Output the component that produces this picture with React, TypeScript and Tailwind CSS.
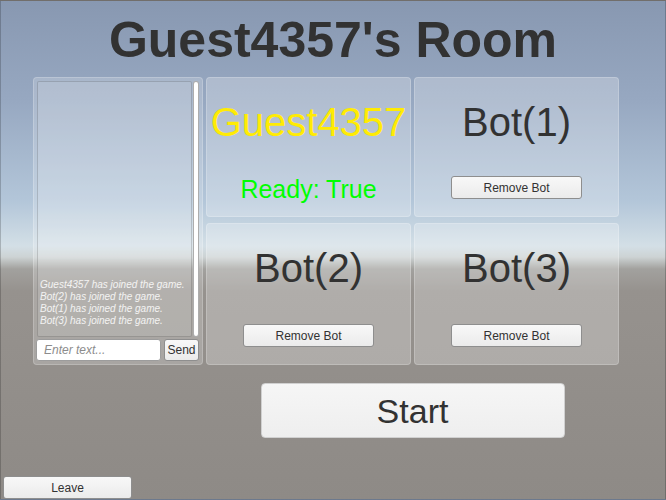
import React from "react";

const sans = { fontFamily: '"Liberation Sans", Arial, sans-serif' };

type Slot =
  | { kind: "player"; name: string; ready: boolean }
  | { kind: "bot"; name: string };

const slots: Slot[] = [
  { kind: "player", name: "Guest4357", ready: true },
  { kind: "bot", name: "Bot(1)" },
  { kind: "bot", name: "Bot(2)" },
  { kind: "bot", name: "Bot(3)" },
];

const messages = [
  "Guest4357 has joined the game.",
  "Bot(2) has joined the game.",
  "Bot(1) has joined the game.",
  "Bot(3) has joined the game.",
];

function SmallButton({ label, className = "" }: { label: string; className?: string }) {
  return (
    <button
      className={`flex items-center justify-center rounded-[3px] border border-[#8e8e8e] bg-gradient-to-b from-[#f8f8f8] to-[#ebebeb] text-[12px] leading-none text-[#323232] ${className}`}
    >
      {label}
    </button>
  );
}

function SlotCard({ slot }: { slot: Slot }) {
  return (
    <div className="flex flex-col items-center rounded-[4px] border border-white/20 bg-white/25">
      {slot.kind === "player" ? (
        <>
          <div className="mt-[24px] h-[40px] text-[40px] leading-none text-[#ffeb04]">{slot.name}</div>
          <div className="mt-auto mb-[15px] h-[25px] text-[25px] leading-[27px] text-[#00ff00]">
            Ready: {slot.ready ? "True" : "False"}
          </div>
        </>
      ) : (
        <>
          <div className="mt-[24px] h-[40px] text-[40px] leading-none text-[#323232]">{slot.name}</div>
          <SmallButton label="Remove Bot" className="mt-auto mb-[17px] h-[23px] w-[131px]" />
        </>
      )}
    </div>
  );
}

function ChatPanel() {
  return (
    <div className="flex h-[288px] w-[170px] flex-col rounded-[4px] border border-white/20 bg-white/20 px-[2px] pt-[3px] pb-[3px]">
      <div className="flex h-[256px]">
        <div className="ml-[1px] flex w-[155px] flex-col justify-end rounded-[2px] border border-black/15 bg-white/10 pb-[9px] pl-[2px]">
          {messages.map((m) => (
            <div key={m} className="text-[10px] italic leading-[12px] text-white/85 whitespace-nowrap">
              {m}
            </div>
          ))}
        </div>
        <div className="ml-[1px] w-[6px] rounded-[3px] border border-[#8a8a8a]/70 bg-white" />
      </div>
      <div className="mt-[2px] flex h-[22px]">
        <input
          className="h-[22px] w-[125px] rounded-[3px] border border-[#9c9c9c] bg-white pl-[7px] text-[12px] italic outline-none placeholder:text-[#8c8c8c] placeholder:italic"
          placeholder="Enter text..."
          style={sans}
        />
        <SmallButton label="Send" className="ml-[3px] h-[22px] w-[35px]" />
      </div>
    </div>
  );
}

export default function App() {
  return (
    <div
      className="flex h-[500px] w-[666px] flex-col overflow-hidden border border-black/20 bg-[linear-gradient(to_bottom,#8898b1_0px,#97a8c1_100px,#b3c6d9_200px,#d3dfe6_245px,#cdd3d4_256px,#a2a19e_268px,#96928e_290px,#8e8a86_500px)]"
      style={sans}
    >
      <h1 className="mt-[14px] h-[50px] text-center text-[50px] font-bold leading-none text-[#323232]">
        Guest4357's Room
      </h1>

      <div className="mt-[12px] flex gap-[3px] pl-[32px]">
        <ChatPanel />
        <div className="flex w-[413px] flex-col">
          <div className="grid grid-cols-[205px_205px] grid-rows-[140px_142px] gap-x-[3px] gap-y-[6px]">
            {slots.map((s) => (
              <SlotCard key={s.name} slot={s} />
            ))}
          </div>
          <button className="mt-[18px] flex h-[55px] w-[304px] items-center justify-center self-center rounded-[4px] border border-[#d0d0d0] bg-gradient-to-b from-[#f6f6f6] to-[#eeeeee] text-[34px] leading-none text-[#323232]">
            Start
          </button>
        </div>
      </div>

      <SmallButton label="Leave" className="mt-auto ml-[2px] h-[23px] w-[129px]" />
    </div>
  );
}
